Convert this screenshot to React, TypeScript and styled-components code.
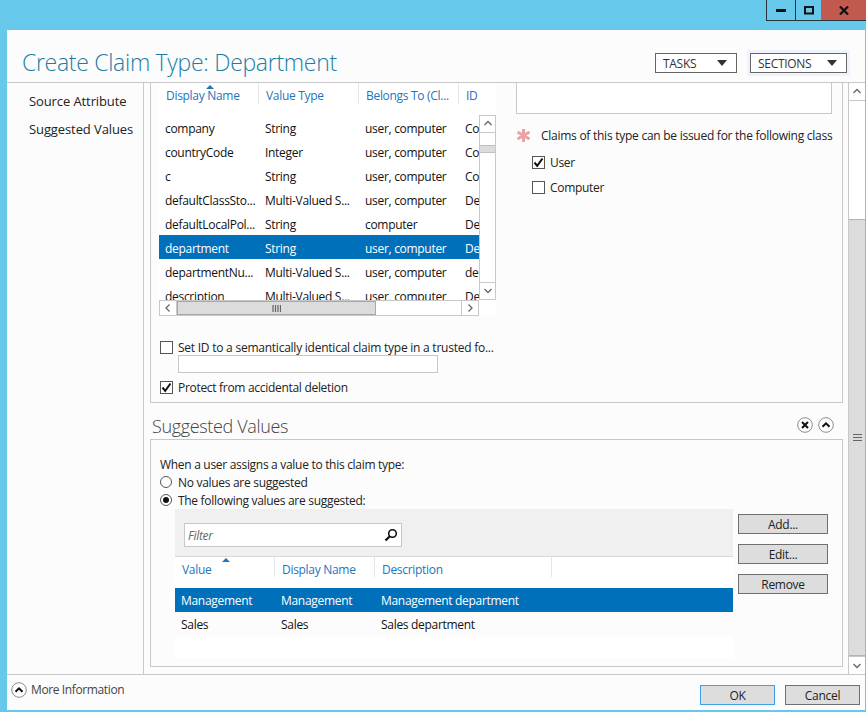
import React from "react";
import styled, { createGlobalStyle } from "styled-components";

const GlobalStyle = createGlobalStyle`
  html, body { margin: 0; padding: 0; }
  body {
    font-family: "Open Sans", "Noto Sans", sans-serif;
    font-size: 12px;
    letter-spacing: -0.3px;
    color: #111;
    overflow: hidden;
  }
`;

const Desktop = styled.div`
  width: 866px;
  height: 712px;
  background: #66c9ec;
  display: flex;
  flex-direction: column;
  overflow: hidden;
`;

const TitleBar = styled.div`
  height: 30px;
  flex: none;
  display: flex;
  justify-content: flex-end;
  align-items: flex-start;
`;

const WinButton = styled.div<{ $w: number; $close?: boolean }>`
  width: ${(p) => p.$w}px;
  height: 21px;
  box-sizing: border-box;
  display: flex;
  align-items: center;
  justify-content: center;
  background: ${(p) => (p.$close ? "#c1594e" : "transparent")};
  border-bottom: 1px solid #26343c;
  border-left: ${(p) => (p.$close ? "none" : "1px solid #26343c")};
`;

const Win = styled.div`
  margin-left: 7px;
  width: 858px;
  height: 680px;
  flex: none;
  background: #fcfcfc;
  display: flex;
  flex-direction: column;
`;

const Header = styled.header`
  height: 53px;
  flex: none;
  box-sizing: border-box;
  border-bottom: 1px solid #c8c8c8;
  display: flex;
  align-items: center;
  padding: 14px 15px 0 15px;
`;

const Title = styled.h1`
  margin: -2px 0 0;
  flex: 1;
  font-size: 23px;
  font-weight: 300;
  letter-spacing: -0.3px;
  color: #1b7ea6;
`;

const HeaderButton = styled.div<{ $w: number; $focus?: boolean }>`
  width: ${(p) => p.$w}px;
  height: 20px;
  box-sizing: border-box;
  border: 1px solid #666;
  background: #fff;
  display: flex;
  align-items: center;
  justify-content: space-between;
  padding: 0 9px 0 7px;
  color: #333;
  margin-left: ${(p) => (p.$focus ? 13 : 0)}px;
  margin-right: ${(p) => (p.$focus ? 3 : 0)}px;
  box-shadow: ${(p) => (p.$focus ? "0 0 0 3px #eef3fd" : "none")};
`;

const Caret = styled.span`
  width: 0;
  height: 0;
  border-left: 5px solid transparent;
  border-right: 5px solid transparent;
  border-top: 6px solid #333;
`;

const Main = styled.div`
  flex: 1;
  display: flex;
  min-height: 0;
`;

const Sidebar = styled.nav`
  width: 137px;
  flex: none;
  box-sizing: border-box;
  border-right: 1px solid #c8c8c8;
  padding: 8px 0 0 22px;
  display: flex;
  flex-direction: column;
  gap: 8px;
`;

const NavItem = styled.div`
  height: 20px;
  line-height: 20px;
  font-size: 13px;
  letter-spacing: -0.1px;
  color: #222;
  white-space: nowrap;
`;

const Scroller = styled.div`
  flex: 1;
  display: flex;
  flex-direction: column;
  padding: 0 5px 0 6px;
  min-width: 0;
`;

const TopPanel = styled.section`
  height: 320px;
  flex: none;
  box-sizing: border-box;
  border: 1px solid #c8c8c8;
  border-top: none;
  padding-left: 8px;
  display: flex;
  gap: 20px;
`;

const LeftCol = styled.div`
  width: 337px;
  flex: none;
  display: flex;
  flex-direction: column;
`;

const ListBox = styled.div`
  width: 337px;
  background: #fff;
  margin-bottom: 24px;
`;

const HeadRow = styled.div<{ $h: number }>`
  height: ${(p) => p.$h}px;
  display: flex;
  position: relative;
  background: #fff;
`;

const HeadCell = styled.div<{ $w: number; $line?: boolean; $lh: number; $rule: number }>`
  width: ${(p) => p.$w}px;
  height: ${(p) => p.$rule}px;
  flex: none;
  box-sizing: border-box;
  padding: 0 0 0 7px;
  line-height: ${(p) => p.$lh}px;
  color: #1f74bd;
  white-space: nowrap;
  overflow: hidden;
  border-right: ${(p) => (p.$line ? "1px solid #e6e6e6" : "none")};
`;

const SortMark = styled.span<{ $x: number; $y: number }>`
  position: absolute;
  left: ${(p) => p.$x}px;
  top: ${(p) => p.$y}px;
  width: 0;
  height: 0;
  border-left: 4px solid transparent;
  border-right: 4px solid transparent;
  border-bottom: 4px solid #1f74bd;
`;

const ListBody = styled.div`
  display: flex;
  height: 185px;
`;

const Rows = styled.div`
  width: 320px;
  height: 185px;
  overflow: hidden;
  flex: none;
`;

const Row = styled.div<{ $selected?: boolean; $lh: number }>`
  display: flex;
  height: 24px;
  line-height: ${(p) => p.$lh}px;
  overflow: hidden;
  background: ${(p) => (p.$selected ? "#0070bb" : "transparent")};
  color: ${(p) => (p.$selected ? "#fff" : "#111")};
`;

const Cell = styled.div<{ $w: number }>`
  width: ${(p) => p.$w}px;
  flex: none;
  box-sizing: border-box;
  padding-left: 6px;
  white-space: nowrap;
  overflow: hidden;
`;

const VBar = styled.div`
  width: 17px;
  box-sizing: border-box;
  border: 1px solid #c8c8c8;
  display: flex;
  flex-direction: column;
  background: #fff;
  flex: none;
`;

const HBar = styled.div`
  width: 320px;
  height: 16px;
  box-sizing: border-box;
  border: 1px solid #c8c8c8;
  display: flex;
  background: #fff;
`;

const ArrowBox = styled.div<{ $size: number; $side: "top" | "bottom" | "left" | "right" }>`
  flex: none;
  ${(p) => (p.$side === "top" || p.$side === "bottom" ? `height: ${p.$size}px;` : `width: ${p.$size}px;`)}
  border-${(p) => ({ top: "bottom", bottom: "top", left: "right", right: "left" })[p.$side]}: 1px solid #c8c8c8;
  display: flex;
  align-items: center;
  justify-content: center;
`;

const VThumb = styled.div<{ $top: number; $h: number }>`
  margin-top: ${(p) => p.$top}px;
  height: ${(p) => p.$h}px;
  background: #dcdcdc;
  border-top: 1px solid #c0c0c0;
  border-bottom: 1px solid #c0c0c0;
  box-sizing: border-box;
  flex: none;
`;

const HThumb = styled.div`
  width: 199px;
  flex: none;
  box-sizing: border-box;
  background: #dcdcdc;
  border: 1px solid #a8a8a8;
  display: flex;
  align-items: center;
  justify-content: center;
`;

const Spacer = styled.div`
  flex: 1;
`;

const CheckRow = styled.label<{ $indent?: number; $wide?: boolean }>`
  display: flex;
  align-items: center;
  gap: 5px;
  height: 14px;
  margin-left: ${(p) => p.$indent ?? 1}px;
  letter-spacing: ${(p) => (p.$wide ? "-0.24px" : "-0.3px")};
  white-space: nowrap;
  color: #222;
`;

const Box = styled.span`
  width: 13px;
  height: 13px;
  flex: none;
  box-sizing: border-box;
  border: 1px solid #555;
  background: #fff;
  display: flex;
  align-items: center;
  justify-content: center;
`;

const IdInput = styled.div`
  width: 260px;
  height: 18px;
  box-sizing: border-box;
  border: 1px solid #c8c8c8;
  background: #fff;
  margin: 1px 0 7px 19px;
  flex: none;
`;

const RightCol = styled.div`
  width: 317px;
  flex: none;
  display: flex;
  flex-direction: column;
  overflow: hidden;
`;

const DescBox = styled.div`
  height: 31px;
  flex: none;
  box-sizing: border-box;
  border: 1px solid #c8c8c8;
  border-top: none;
  width: 316px;
  background: #fff;
  margin-bottom: 13px;
`;

const RequiredRow = styled.div`
  display: flex;
  align-items: center;
  gap: 10px;
  height: 16px;
  letter-spacing: -0.26px;
  white-space: nowrap;
  margin-bottom: 12px;
  color: #222;
`;

const Checks = styled.div`
  display: flex;
  flex-direction: column;
  gap: 11px;
  padding-left: 16px;
`;

const SectionHead = styled.div`
  height: 36px;
  flex: none;
  display: flex;
  align-items: center;
  padding: 8px 9px 0 2px;
  box-sizing: border-box;
  gap: 5px;
`;

const SectionTitle = styled.h2`
  margin: 2px 0 0;
  flex: 1;
  font-size: 18px;
  font-weight: 300;
  letter-spacing: -0.35px;
  color: #444;
`;

const BottomPanel = styled.section`
  height: 228px;
  flex: none;
  box-sizing: border-box;
  border: 1px solid #c8c8c8;
  padding: 16px 9px 0 9px;
  display: flex;
  flex-direction: column;
`;

const Line = styled.div`
  height: 17px;
  line-height: 18px;
  white-space: nowrap;
  color: #222;
`;

const RadioRow = styled.div`
  display: flex;
  align-items: center;
  gap: 6px;
  height: 18px;
  color: #222;
  white-space: nowrap;
`;

const Radio = styled.span<{ $on?: boolean }>`
  width: 12px;
  height: 12px;
  box-sizing: border-box;
  border: 1px solid #555;
  border-radius: 50%;
  background: #fff;
  display: flex;
  align-items: center;
  justify-content: center;
  flex: none;
  &::after {
    content: "";
    width: 6px;
    height: 6px;
    border-radius: 50%;
    background: ${(p) => (p.$on ? "#111" : "transparent")};
  }
`;

const ValuesArea = styled.div`
  display: flex;
  margin-left: 15px;
  gap: 5px;
`;

const ValuesTable = styled.div`
  width: 558px;
  flex: none;
  display: flex;
  flex-direction: column;
`;

const FilterBar = styled.div`
  height: 48px;
  box-sizing: border-box;
  background: #f0f0f0;
  border-bottom: 1px solid #d8d8d8;
  padding: 14px 0 0 9px;
`;

const FilterInput = styled.div`
  width: 218px;
  height: 24px;
  box-sizing: border-box;
  border: 1px solid #c8c8c8;
  background: #fff;
  display: flex;
  align-items: center;
  justify-content: space-between;
  padding: 0 3px;
  font-style: italic;
  color: #666;
`;

const TableFill = styled.div`
  height: 22px;
  background: #fff;
`;

const SideButtons = styled.div`
  display: flex;
  flex-direction: column;
  gap: 10px;
  padding-top: 5px;
`;

const Btn = styled.div<{ $w: number; $default?: boolean }>`
  width: ${(p) => p.$w}px;
  height: 20px;
  box-sizing: border-box;
  border: 1px solid ${(p) => (p.$default ? "#3c9fe8" : "#707070")};
  background: #dddddd;
  display: flex;
  align-items: center;
  justify-content: center;
  color: #222;
`;

const PageBar = styled.div`
  width: 17px;
  flex: none;
  box-sizing: border-box;
  border: 1px solid #c8c8c8;
  border-width: 0 0 0 1px;
  background: #fff;
  display: flex;
  flex-direction: column;
`;

const PageThumb = styled.div`
  flex: 1;
  margin-top: 118px;
  background: #dcdcdc;
  border: 1px solid #b4b4b4;
  border-width: 1px 0;
  display: flex;
  align-items: center;
  justify-content: center;
`;

const Footer = styled.footer`
  height: 36px;
  flex: none;
  box-sizing: border-box;
  border-top: 1px solid #c8c8c8;
  display: flex;
  align-items: center;
  padding: 0 5px 0 4px;
  gap: 10px;
`;

const More = styled.div`
  flex: 1;
  display: flex;
  align-items: center;
  gap: 4px;
  margin-top: -6px;
  letter-spacing: -0.38px;
  color: #444;
`;

const FooterButtons = styled.div`
  display: flex;
  gap: 10px;
  margin-top: 5px;
`;

const Chevron = ({ dir }: { dir: "up" | "down" | "left" | "right" }) => {
  const d = {
    up: "M1.5 6 L5 2.5 L8.5 6",
    down: "M1.5 3 L5 6.5 L8.5 3",
    left: "M6.5 1.5 L3 5 L6.5 8.5",
    right: "M3.5 1.5 L7 5 L3.5 8.5",
  }[dir];
  return (
    <svg width="10" height="10" viewBox="0 0 10 10">
      <path d={d} fill="none" stroke="#666" strokeWidth="1.3" />
    </svg>
  );
};

const Tick = () => (
  <svg width="11" height="11" viewBox="0 0 11 11">
    <path d="M1.5 5.5 L4.2 8.8 L9.5 1.5" fill="none" stroke="#111" strokeWidth="2" />
  </svg>
);

const Grip = ({ vertical }: { vertical?: boolean }) => (
  <svg width="9" height="9" viewBox="0 0 9 9">
    {vertical ? (
      <path d="M1 1 V8 M3.5 1 V8 M6 1 V8 M8.5 1 V8" stroke="#666" strokeWidth="1.2" />
    ) : (
      <path d="M0 1.5 H9 M0 4.5 H9 M0 7.5 H9" stroke="#666" strokeWidth="1.2" />
    )}
  </svg>
);

const CircleIcon = ({ kind }: { kind: "x" | "up" }) => (
  <svg width="16" height="16" viewBox="0 0 16 16">
    <circle cx="8" cy="8" r="7.3" fill="#fff" stroke="#8a8a8a" />
    {kind === "x" ? (
      <path d="M5 5 L11 11 M11 5 L5 11" stroke="#111" strokeWidth="2" />
    ) : (
      <path d="M4.5 9.8 L8 6.3 L11.5 9.8" fill="none" stroke="#111" strokeWidth="2" />
    )}
  </svg>
);

const StarIcon = styled.svg`
  flex: none;
`;

const Asterisk = () => (
  <StarIcon width="15" height="15" viewBox="0 0 15 15">
    <path d="M7.5 1 V14 M1.5 4 L13.5 11 M13.5 4 L1.5 11" stroke="#e9a3a3" strokeWidth="3" />
  </StarIcon>
);

const Search = () => (
  <svg width="14" height="14" viewBox="0 0 14 14">
    <circle cx="8.5" cy="5.5" r="3.8" fill="none" stroke="#111" strokeWidth="1.6" />
    <path d="M5.8 8.2 L1.5 12.5" stroke="#111" strokeWidth="2.2" />
  </svg>
);

const attributes = [
  ["company", "String", "user, computer", "Company"],
  ["countryCode", "Integer", "user, computer", "Country"],
  ["c", "String", "user, computer", "Country"],
  ["defaultClassSto...", "Multi-Valued S...", "user, computer", "Default"],
  ["defaultLocalPol...", "String", "computer", "Default"],
  ["department", "String", "user, computer", "Department"],
  ["departmentNu...", "Multi-Valued S...", "user, computer", "department"],
  ["description", "Multi-Valued S...", "user, computer", "Description"],
];

const values = [
  ["Management", "Management", "Management department"],
  ["Sales", "Sales", "Sales department"],
];

export default function App() {
  return (
    <Desktop>
      <GlobalStyle />
      <TitleBar>
        <WinButton $w={29}>
          <svg width="11" height="4" viewBox="0 0 11 4"><rect width="10" height="3" y="1" fill="#111" /></svg>
        </WinButton>
        <WinButton $w={26}>
          <svg width="10" height="9" viewBox="0 0 10 9"><rect x="1" y="1" width="8" height="6.5" fill="none" stroke="#111" strokeWidth="2" /></svg>
        </WinButton>
        <WinButton $w={45} $close>
          <svg width="10" height="9" viewBox="0 0 10 9"><path d="M1 0.5 L9 8.5 M9 0.5 L1 8.5" stroke="#111" strokeWidth="2.2" /></svg>
        </WinButton>
      </TitleBar>
      <Win>
        <Header>
          <Title>Create Claim Type: Department</Title>
          <HeaderButton $w={82}>TASKS<Caret /></HeaderButton>
          <HeaderButton $w={97} $focus>SECTIONS<Caret /></HeaderButton>
        </Header>
        <Main>
          <Sidebar>
            <NavItem>Source Attribute</NavItem>
            <NavItem>Suggested Values</NavItem>
          </Sidebar>
          <Scroller>
            <TopPanel>
              <LeftCol>
                <ListBox>
                  <HeadRow $h={32}>
                    <HeadCell $w={100} $line $lh={26} $rule={21}>Display Name</HeadCell>
                    <HeadCell $w={100} $line $lh={26} $rule={21}>Value Type</HeadCell>
                    <HeadCell $w={100} $line $lh={26} $rule={21}>Belongs To (Cl...</HeadCell>
                    <HeadCell $w={37} $lh={26} $rule={21}>ID</HeadCell>
                    <SortMark $x={47} $y={2} />
                  </HeadRow>
                  <ListBody>
                    <Rows>
                      {attributes.map((a) => (
                        <Row key={a[0]} $selected={a[0] === "department"} $lh={27}>
                          <Cell $w={100}>{a[0]}</Cell>
                          <Cell $w={100}>{a[1]}</Cell>
                          <Cell $w={100}>{a[2]}</Cell>
                          <Cell $w={20}>{a[3]}</Cell>
                        </Row>
                      ))}
                    </Rows>
                    <VBar>
                      <ArrowBox $size={16} $side="top"><Chevron dir="up" /></ArrowBox>
                      <VThumb $top={12} $h={8} />
                      <Spacer />
                      <ArrowBox $size={16} $side="bottom"><Chevron dir="down" /></ArrowBox>
                    </VBar>
                  </ListBody>
                  <HBar>
                    <ArrowBox $size={16} $side="left"><Chevron dir="left" /></ArrowBox>
                    <HThumb><Grip vertical /></HThumb>
                    <Spacer />
                    <ArrowBox $size={16} $side="right"><Chevron dir="right" /></ArrowBox>
                  </HBar>
                </ListBox>
                <CheckRow $wide>
                  <Box />
                  Set ID to a semantically identical claim type in a trusted fo...
                </CheckRow>
                <IdInput />
                <CheckRow>
                  <Box><Tick /></Box>
                  Protect from accidental deletion
                </CheckRow>
              </LeftCol>
              <RightCol>
                <DescBox />
                <RequiredRow>
                  <Asterisk />
                  Claims of this type can be issued for the following class
                </RequiredRow>
                <Checks>
                  <CheckRow $indent={0}><Box><Tick /></Box>User</CheckRow>
                  <CheckRow $indent={0}><Box />Computer</CheckRow>
                </Checks>
              </RightCol>
            </TopPanel>
            <SectionHead>
              <SectionTitle>Suggested Values</SectionTitle>
              <CircleIcon kind="x" />
              <CircleIcon kind="up" />
            </SectionHead>
            <BottomPanel>
              <Line>When a user assigns a value to this claim type:</Line>
              <RadioRow><Radio />No values are suggested</RadioRow>
              <RadioRow><Radio $on />The following values are suggested:</RadioRow>
              <ValuesArea>
                <ValuesTable>
                  <FilterBar>
                    <FilterInput>Filter<Search /></FilterInput>
                  </FilterBar>
                  <HeadRow $h={31}>
                    <HeadCell $w={100} $line $lh={25} $rule={20}>Value</HeadCell>
                    <HeadCell $w={100} $line $lh={25} $rule={20}>Display Name</HeadCell>
                    <HeadCell $w={177} $line $lh={25} $rule={20}>Description</HeadCell>
                    <SortMark $x={47} $y={1} />
                  </HeadRow>
                  {values.map((v, i) => (
                    <Row key={v[0]} $selected={i === 0} $lh={26}>
                      <Cell $w={100}>{v[0]}</Cell>
                      <Cell $w={100}>{v[1]}</Cell>
                      <Cell $w={200}>{v[2]}</Cell>
                    </Row>
                  ))}
                  <TableFill />
                </ValuesTable>
                <SideButtons>
                  <Btn $w={90}>Add...</Btn>
                  <Btn $w={90}>Edit...</Btn>
                  <Btn $w={90}>Remove</Btn>
                </SideButtons>
              </ValuesArea>
            </BottomPanel>
          </Scroller>
          <PageBar>
            <ArrowBox $size={17} $side="top"><Chevron dir="up" /></ArrowBox>
            <PageThumb><Grip /></PageThumb>
            <ArrowBox $size={17} $side="bottom"><Chevron dir="down" /></ArrowBox>
          </PageBar>
        </Main>
        <Footer>
          <More><CircleIcon kind="up" />More Information</More>
          <FooterButtons>
            <Btn $w={75} $default>OK</Btn>
            <Btn $w={75}>Cancel</Btn>
          </FooterButtons>
        </Footer>
      </Win>
    </Desktop>
  );
}
